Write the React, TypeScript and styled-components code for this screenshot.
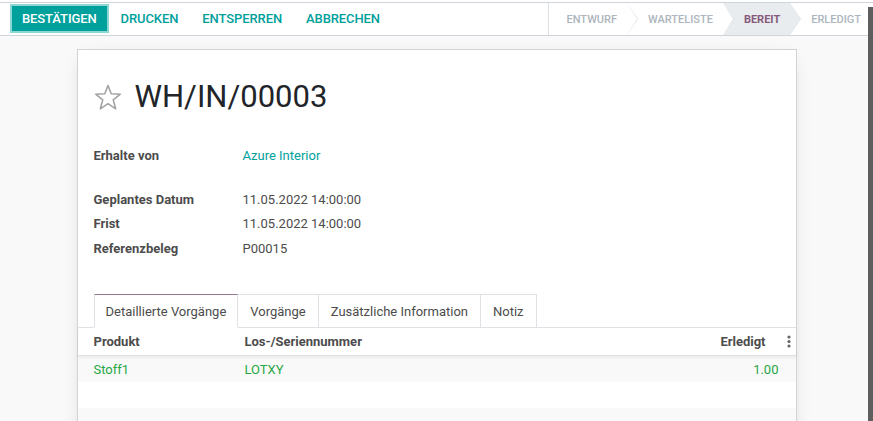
import React from "react";
import styled, { createGlobalStyle } from "styled-components";

const GlobalStyle = createGlobalStyle`
  html, body { margin: 0; padding: 0; }
  body {
    font-family: Roboto, "Noto Sans", "Liberation Sans", sans-serif;
    font-size: 13px;
    color: #4c4c4c;
    background: #f9f9f9;
    overflow: hidden;
  }
  * { box-sizing: border-box; }
`;

const Page = styled.div`
  position: relative;
  height: 421px;
  overflow: hidden;
  background: #f9f9f9;
`;

const Header = styled.div`
  background: #fff;
  padding-top: 2px;
`;

const Bar = styled.div`
  display: flex;
  align-items: stretch;
  height: 34px;
  border-top: 1px solid #ced4da;
  border-bottom: 1px solid #ced4da;
`;

const Buttons = styled.div`
  display: flex;
  align-items: center;
  padding-left: 10px;
`;

const ActionButton = styled.button<{ $primary?: boolean }>`
  font-family: Roboto, "Liberation Sans", sans-serif;
  font-size: 13px;
  font-weight: 500;
  letter-spacing: -0.1px;
  text-transform: uppercase;
  height: 29px;
  padding: 0 10px;
  border: 2px solid ${(p) => (p.$primary ? "#8ed6d4" : "transparent")};
  background: ${(p) => (p.$primary ? "#00a09d" : "transparent")};
  color: ${(p) => (p.$primary ? "#fff" : "#00a09d")};
  cursor: pointer;
  margin-top: -1px;
`;

const StatusBar = styled.div`
  display: flex;
  margin-left: auto;
  border-left: 1px solid #dee2e6;
`;

const Step = styled.div<{ $active?: boolean; $last?: boolean; $first?: boolean }>`
  position: relative;
  display: flex;
  align-items: center;
  height: 32px;
  padding: 0 ${(p) => (p.$last ? "12px" : "10px")} 0 ${(p) => (p.$first ? "18px" : "21px")};
  background: ${(p) => (p.$active ? "#e9ecef" : "#fff")};
  color: ${(p) => (p.$active ? "#875a7b" : "#adb5bd")};
  font-size: 11px;
  font-weight: ${(p) => (p.$active ? 700 : 500)};
  text-transform: uppercase;
  white-space: nowrap;

  &::before {
    content: ${(p) => (p.$last ? "none" : "''")};
    position: absolute;
    top: 0;
    right: -11px;
    border-top: 16px solid transparent;
    border-bottom: 16px solid transparent;
    border-left: 11px solid #dee2e6;
    z-index: 1;
  }
  &::after {
    content: ${(p) => (p.$last ? "none" : "''")};
    position: absolute;
    top: 0;
    right: -10px;
    border-top: 16px solid transparent;
    border-bottom: 16px solid transparent;
    border-left: 10px solid ${(p) => (p.$active ? "#e9ecef" : "#fff")};
    z-index: 2;
  }
`;

const Content = styled.div`
  display: flex;
  justify-content: center;
  padding-top: 13px;
`;

const Sheet = styled.div`
  width: 720px;
  min-height: 400px;
  background: #fff;
  border: 1px solid #d3d3d3;
  box-shadow: 0 5px 20px -8px rgba(0, 0, 0, 0.2);
`;

const TitleRow = styled.div`
  display: flex;
  align-items: center;
  gap: 13px;
  padding: 29px 16px 0 16px;
`;

const Title = styled.h1`
  margin: 0;
  font-size: 31px;
  line-height: 36px;
  font-weight: 400;
  color: #212529;
`;

const FieldGroup = styled.div<{ $top: number }>`
  display: grid;
  grid-template-columns: 149px 1fr;
  padding: 0 16px;
  margin-top: ${(p) => p.$top}px;
`;

const Label = styled.div`
  font-weight: 700;
  color: #4c4c4c;
  line-height: 24.5px;
`;

const Value = styled.div<{ $link?: boolean }>`
  color: ${(p) => (p.$link ? "#00a09d" : "#4c4c4c")};
  line-height: 24.5px;
`;

const TabNav = styled.div`
  display: flex;
  margin-top: 33px;
  padding-left: 16px;
  border-bottom: 1px solid #dee2e6;
`;

const Tab = styled.div<{ $active?: boolean }>`
  height: 34px;
  padding: 0 ${(p) => (p.$active ? "11px" : "12px")};
  display: flex;
  align-items: center;
  color: #4c4c4c;
  background: #fff;
  border: 1px solid #dee2e6;
  border-left-width: ${(p) => (p.$active ? "1px" : "0")};
  border-top-color: ${(p) => (p.$active ? "#9c7593" : "#dee2e6")};
  border-bottom-color: ${(p) => (p.$active ? "#fff" : "#dee2e6")};
  margin-bottom: -1px;
`;

const Table = styled.div`
  display: flex;
  flex-direction: column;
`;

const HeadRow = styled.div`
  display: grid;
  grid-template-columns: 167px 1fr 120px 30px;
  height: 28px;
  align-items: center;
  font-weight: 700;
  color: #4c4c4c;
  border-bottom: 1px solid #dee2e6;
  box-shadow: 0 2px 3px rgba(0, 0, 0, 0.06);
  position: relative;
  z-index: 1;
`;

const DataRow = styled.div<{ $striped?: boolean }>`
  display: grid;
  grid-template-columns: 167px 1fr 150px;
  height: 26px;
  align-items: center;
  background: ${(p) => (p.$striped ? "#f9f9f9" : "#fff")};
  color: #28a745;
`;

const FirstCell = styled.div`
  padding-left: 16px;
  white-space: nowrap;
`;

const NumCell = styled.div<{ $pad: number }>`
  text-align: right;
  padding-right: ${(p) => p.$pad}px;
  white-space: nowrap;
`;

const Kebab = styled.div`
  display: flex;
  padding-left: 21px;
`;

const Scrollbar = styled.div`
  position: absolute;
  right: 0;
  top: 7px;
  bottom: 0;
  width: 5px;
  background: #5e5e5e;
`;

const StarIcon = () => (
  <svg width="28" height="27" viewBox="0 0 27 27" fill="none">
    <polygon
      points="13.5,1.5 16.73,9.8 25.86,10.2 18.73,15.9 21.14,24.8 13.5,19.7 5.86,24.8 8.27,15.9 1.14,10.2 10.27,9.8"
      stroke="#a3a3a3"
      strokeWidth="1.6"
      strokeLinejoin="round"
      fill="none"
    />
  </svg>
);

const KebabIcon = () => (
  <svg width="4" height="13" viewBox="0 0 4 13">
    <circle cx="2" cy="2" r="1.6" fill="#666" />
    <circle cx="2" cy="6.5" r="1.6" fill="#666" />
    <circle cx="2" cy="11" r="1.6" fill="#666" />
  </svg>
);

export default function App() {
  return (
    <Page>
      <GlobalStyle />
      <Header>
        <Bar>
          <Buttons>
            <ActionButton $primary>Bestätigen</ActionButton>
            <ActionButton>Drucken</ActionButton>
            <ActionButton>Entsperren</ActionButton>
            <ActionButton>Abbrechen</ActionButton>
          </Buttons>
          <StatusBar>
            <Step $first>Entwurf</Step>
            <Step>Warteliste</Step>
            <Step $active>Bereit</Step>
            <Step $last>Erledigt</Step>
          </StatusBar>
        </Bar>
      </Header>
      <Content>
        <Sheet>
          <TitleRow>
            <StarIcon />
            <Title>WH/IN/00003</Title>
          </TitleRow>
          <FieldGroup $top={29}>
            <Label>Erhalte von</Label>
            <Value $link>Azure Interior</Value>
          </FieldGroup>
          <FieldGroup $top={19}>
            <Label>Geplantes Datum</Label>
            <Value>11.05.2022 14:00:00</Value>
            <Label>Frist</Label>
            <Value>11.05.2022 14:00:00</Value>
            <Label>Referenzbeleg</Label>
            <Value>P00015</Value>
          </FieldGroup>
          <TabNav>
            <Tab $active>Detaillierte Vorgänge</Tab>
            <Tab>Vorgänge</Tab>
            <Tab>Zusätzliche Information</Tab>
            <Tab>Notiz</Tab>
          </TabNav>
          <Table>
            <HeadRow>
              <FirstCell>Produkt</FirstCell>
              <div>Los-/Seriennummer</div>
              <NumCell $pad={0}>Erledigt</NumCell>
              <Kebab>
                <KebabIcon />
              </Kebab>
            </HeadRow>
            <DataRow $striped>
              <FirstCell>Stoff1</FirstCell>
              <div>LOTXY</div>
              <NumCell $pad={17}>1.00</NumCell>
            </DataRow>
            <DataRow />
            <DataRow $striped />
          </Table>
        </Sheet>
      </Content>
      <Scrollbar />
    </Page>
  );
}
